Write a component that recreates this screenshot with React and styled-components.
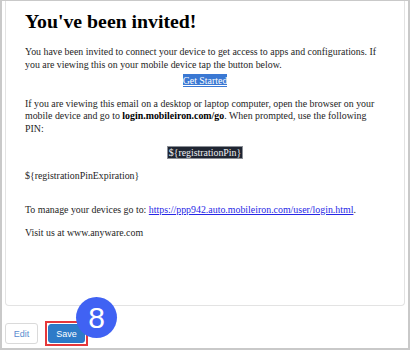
import styled, { createGlobalStyle } from 'styled-components';

const GlobalStyle = createGlobalStyle`
  html, body {
    margin: 0;
    padding: 0;
    background: #ffffff;
  }
`;

const App = () => {
  return (
    <>
      <GlobalStyle />
      <Frame>
        <Panel>
          <Title>You've been invited!</Title>
          <Para>
            You have been invited to connect your device to get access to apps and configurations. If
            you are viewing this on your mobile device tap the button below.
          </Para>
          <Center $tight>
            <StartLink href="#">Get Started</StartLink>
          </Center>
          <Para>
            If you are viewing this email on a desktop or laptop computer, open the browser on your
            mobile device and go to <b>login.mobileiron.com/go</b>. When prompted, use the following
            PIN:
          </Para>
          <Center>
            <Pin>{'${registrationPin}'}</Pin>
          </Center>
          <Para>{'${registrationPinExpiration}'}</Para>
          <Para $spaced>
            To manage your devices go to:{' '}
            <Url href="#">https://ppp942.auto.mobileiron.com/user/login.html</Url>.
          </Para>
          <Para>Visit us at www.anyware.com</Para>
        </Panel>

        <Actions>
          <Button>Edit</Button>
          <Highlight>
            <Button $primary>Save</Button>
            <Badge>8</Badge>
          </Highlight>
        </Actions>
      </Frame>
    </>
  );
};

// Styled Components
const Frame = styled.div`
  width: 410px;
  height: 350px;
  box-sizing: border-box;
  border: 2px solid #c9c9c9;
  border-top-width: 1px;
  background: #ffffff;
  display: flex;
  flex-direction: column;
  overflow: hidden;
`;

const Panel = styled.div`
  margin: 0 3px;
  height: 305px;
  box-sizing: border-box;
  padding: 8px 19px 0;
  border: 1px solid #e3e3e3;
  border-top: none;
  border-radius: 0 0 4px 4px;
  font-family: 'Liberation Serif', 'Times New Roman', serif;
  font-size: 9.9px;
  line-height: 12.5px;
  color: #1e1e1e;
`;

const Title = styled.h1`
  margin: 0 0 13px;
  font-size: 19.8px;
  line-height: 24px;
  font-weight: bold;
  color: #000000;
`;

const Para = styled.p`
  margin: ${(p) => (p.$spaced ? '22px 0 10.5px' : '10.5px 0')};

  &:first-of-type {
    margin-top: 0;
  }

  b {
    font-weight: bold;
    color: #000000;
  }
`;

const Center = styled.div`
  text-align: center;
  margin-top: ${(p) => (p.$tight ? '-7px' : '0')};
`;

const StartLink = styled.a`
  background: #3a78d3;
  color: #ffffff;
  text-decoration: underline;
  padding: 1px 0;
`;

const Pin = styled.span`
  display: inline-block;
  background: #1f2532;
  color: #eef0f3;
  border: 1px solid #8b8f96;
  padding: 0 1px;
  line-height: 11px;
`;

const Url = styled.a`
  color: #2727e6;
  text-decoration: underline;
`;

const Actions = styled.div`
  display: flex;
  align-items: center;
  gap: 7px;
  margin-top: 15px;
  padding-left: 3px;
`;

const Highlight = styled.div`
  position: relative;
  border: 2px solid #e5383b;
  padding: 1px;
  display: flex;
`;

const Button = styled.button`
  box-sizing: border-box;
  height: ${(p) => (p.$primary ? '19px' : '21px')};
  width: ${(p) => (p.$primary ? '37px' : '33px')};
  padding: 0;
  border-radius: 3px;
  border: 1px solid ${(p) => (p.$primary ? '#2a78c6' : '#dadada')};
  background: ${(p) => (p.$primary ? '#2d7bc8' : '#ffffff')};
  color: ${(p) => (p.$primary ? '#ffffff' : '#5a8ccf')};
  font-family: 'Liberation Sans', Arial, sans-serif;
  font-size: 9px;
  cursor: pointer;
`;

const Badge = styled.div`
  position: absolute;
  left: 29px;
  top: -26px;
  width: 41px;
  height: 41px;
  border-radius: 50%;
  background: #4062f3;
  color: #ffffff;
  display: flex;
  align-items: center;
  justify-content: center;
  font-family: 'Liberation Sans', Arial, sans-serif;
  font-size: 30px;
  line-height: 1;
`;

export default App;
